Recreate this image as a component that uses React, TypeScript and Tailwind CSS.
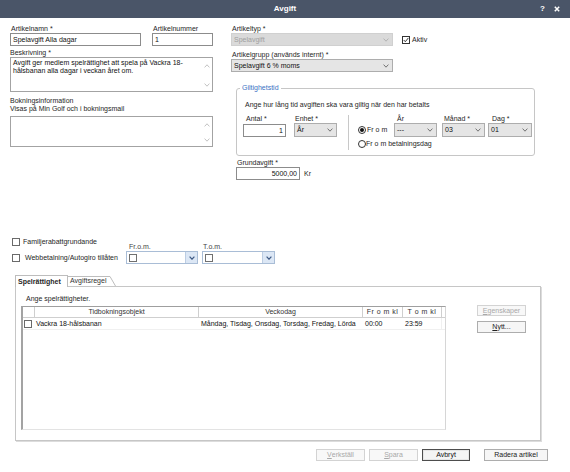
import React from "react";

function Chevron({ color = "#555", sw = 0.8 }: { color?: string; sw?: number }) {
  return (
    <svg width="6" height="4" viewBox="0 0 6 4" className="shrink-0">
      <polyline points="0.6,0.6 3,3.2 5.4,0.6" fill="none" stroke={color} strokeWidth={sw} />
    </svg>
  );
}

function Up({ color = "#b3b3b3" }: { color?: string }) {
  return (
    <svg width="6" height="4" viewBox="0 0 6 4" className="shrink-0">
      <polyline points="0.6,3.4 3,0.8 5.4,3.4" fill="none" stroke={color} strokeWidth={0.8} />
    </svg>
  );
}

function Label({ children, className = "" }: { children: React.ReactNode; className?: string }) {
  return <div className={"h-[8px] leading-[8px] whitespace-nowrap " + className}>{children}</div>;
}

function Input({ value, className = "", right = false }: { value?: string; className?: string; right?: boolean }) {
  return (
    <div
      className={
        "flex items-center border border-[#8c8c8c] bg-white px-[2px] text-[#111] " +
        (right ? "justify-end " : "") +
        className
      }
    >
      <span className="leading-[8px] whitespace-nowrap">{value}</span>
    </div>
  );
}

function Select({ value, className = "", disabled = false }: { value: string; className?: string; disabled?: boolean }) {
  return (
    <div
      className={
        "flex items-center justify-between border pl-[2px] pr-[3px] " +
        (disabled ? "border-[#d0d0d0] bg-[#dadada] text-[#a0a0a0] " : "border-[#adadad] bg-[#e5e5e5] text-[#111] ") +
        className
      }
    >
      <span className="leading-[8px] whitespace-nowrap">{value}</span>
      <Chevron color={disabled ? "#a8a8a8" : "#555"} />
    </div>
  );
}

function Box({ checked = false, light = false, className = "" }: { checked?: boolean; light?: boolean; className?: string }) {
  return (
    <div
      className={
        "flex h-[8px] w-[8px] shrink-0 items-center justify-center border bg-white " +
        (light ? "border-[#6a6a6a] " : "border-[#333] ") +
        className
      }
    >
      {checked && (
        <svg width="6" height="6" viewBox="0 0 6 6">
          <polyline points="0.7,3 2.3,4.7 5.4,0.9" fill="none" stroke="#222" strokeWidth="0.9" />
        </svg>
      )}
    </div>
  );
}

function Radio({ checked = false }: { checked?: boolean }) {
  return (
    <div className="flex h-[8px] w-[8px] shrink-0 items-center justify-center rounded-full border border-[#333] bg-white">
      {checked && <div className="h-[4px] w-[4px] rounded-full bg-[#111]" />}
    </div>
  );
}

function TextArea({ children, className = "" }: { children?: React.ReactNode; className?: string }) {
  return (
    <div className={"flex border border-[#a3a3a3] bg-white " + className}>
      <div className="flex-1 pl-[2px] pt-[1px] leading-[7.5px] text-[#111]">{children}</div>
      <div className="flex w-[10px] flex-col items-center justify-between pb-[4px] pt-[6px]">
        <Up />
        <Chevron color="#b3b3b3" />
      </div>
    </div>
  );
}

function Combo({ className = "" }: { className?: string }) {
  return (
    <div className={"flex h-[13px] border border-[#a9bdd6] bg-white " + className}>
      <div className="flex flex-1 items-center pl-[2px]">
        <div className="h-[8px] w-[8px] border border-[#707070] bg-white" />
      </div>
      <div className="flex w-[12px] items-center justify-center border-l border-[#bccde3] bg-[#dce7f5]">
        <Chevron color="#3e5a85" sw={1.2} />
      </div>
    </div>
  );
}

function Btn({
  children,
  className = "",
  kind = "normal",
}: {
  children: React.ReactNode;
  className?: string;
  kind?: "normal" | "disabled" | "default";
}) {
  const k =
    kind === "disabled"
      ? "border-[#d3d3d3] bg-[#f8f8f8] text-[#a8a8a8] "
      : kind === "default"
      ? "border-[#4d4d4d] bg-[#f4f4f4] text-[#111] shadow-[inset_0_0_0_1px_#e6e6e6] "
      : "border-[#adadad] bg-[#f6f6f6] text-[#222] ";
  return (
    <div className={"flex items-center justify-center border leading-[8px] whitespace-nowrap " + k + className}>
      {children}
    </div>
  );
}

export default function App() {
  return (
    <div className="h-[472px] w-[570px] overflow-hidden bg-white font-['Liberation_Sans',Arial,sans-serif] text-[7px] text-[#262626]">
      {/* Title bar */}
      <div className="flex h-[18px] items-center bg-[#4a5568] text-white">
        <div className="w-[40px]" />
        <div className="flex-1 text-center text-[8px] font-bold leading-[10px]">Avgift</div>
        <div className="flex w-[40px] items-center gap-[9px] pl-[10px]">
          <span className="text-[8px] font-bold leading-[10px]">?</span>
          <svg width="6" height="6" viewBox="0 0 6 6">
            <path d="M0.8 0.8 L5.2 5.2 M5.2 0.8 L0.8 5.2" stroke="#fff" strokeWidth="1.5" />
          </svg>
        </div>
      </div>

      {/* Top section */}
      <div className="flex pt-[7px]">
        <div className="ml-[10px] flex w-[203px] flex-col">
          <div className="flex">
            <div className="w-[131px]">
              <Label className="pl-[1px]">Artikelnamn *</Label>
              <Input className="h-[13px]" value="Spelavgift Alla dagar" />
            </div>
            <div className="ml-[11px] w-[61px]">
              <Label className="pl-[1px]">Artikelnummer</Label>
              <Input className="h-[13px]" value="1" />
            </div>
          </div>
          <Label className="mt-[3px]">Beskrivning *</Label>
          <TextArea className="h-[35px]">
            Avgift ger medlem spelrättighet att spela på Vackra 18-
            <br />
            hålsbanan alla dagar i veckan året om.
          </TextArea>
          <Label className="mt-[5px]">Bokningsinformation</Label>
          <Label>Visas på Min Golf och i bokningsmail</Label>
          <TextArea className="mt-[3px] h-[31px]" />
        </div>

        <div className="ml-[18px] flex flex-col">
          <Label className="pl-[1px]">Artikeltyp *</Label>
          <div className="flex items-center">
            <Select disabled className="h-[13px] w-[162px]" value="Spelavgift" />
            <Box checked className="ml-[9px]" />
            <span className="ml-[2px] leading-[8px]">Aktiv</span>
          </div>
          <Label className="mt-[5px] pl-[1px]">Artikelgrupp (används internt) *</Label>
          <Select className="h-[13px] w-[162px]" value="Spelavgift 6 % moms" />

          <fieldset className="ml-[5px] mt-[12px] w-[299px] rounded-[3px] border border-[#c6c6c6] pb-[5px]">
            <legend className="ml-[3px] px-[2px] leading-[8px] text-[#3a72c4]">Giltighetstid</legend>
            <div className="pl-[6px]">
              <div className="pl-[2px] pt-[9px] leading-[8px] whitespace-nowrap">
                Ange hur lång tid avgiften ska vara giltig när den har betalts
              </div>
              <div className="mt-[6px] flex items-start">
                <div className="w-[43px]">
                  <Label className="pl-[3px]">Antal *</Label>
                  <Input right className="mt-[1px] h-[13px]" value="1" />
                </div>
                <div className="ml-[8px] w-[43px]">
                  <Label className="pl-[1px]">Enhet *</Label>
                  <Select className="h-[14px]" value="År" />
                </div>
                <div className="ml-[11px] h-[35px] w-px bg-[#c8c8c8]" />
                <div className="ml-[9px] flex flex-col">
                  <div className="flex items-end">
                    <div className="flex h-[14px] w-[36px] items-center">
                      <Radio checked />
                      <span className="ml-[1px] leading-[8px]">Fr o m</span>
                    </div>
                    <div className="w-[43px]">
                      <Label className="pl-[3px]">År</Label>
                      <Select className="h-[14px]" value="---" />
                    </div>
                    <div className="ml-[5px] w-[43px]">
                      <Label className="pl-[2px]">Månad *</Label>
                      <Select className="h-[14px]" value="03" />
                    </div>
                    <div className="ml-[3px] w-[44px]">
                      <Label className="pl-[4px]">Dag *</Label>
                      <Select className="h-[14px]" value="01" />
                    </div>
                  </div>
                  <div className="mt-[3px] flex h-[8px] items-center">
                    <Radio />
                    <span className="leading-[8px]">Fr o m betalningsdag</span>
                  </div>
                </div>
              </div>
            </div>
          </fieldset>

          <div className="ml-[5px]">
            <Label className="mt-[3px] pl-[1px]">Grundavgift *</Label>
            <div className="flex items-center">
              <Input right className="h-[13px] w-[64px]" value="5000,00" />
              <span className="ml-[4px] leading-[8px]">Kr</span>
            </div>
          </div>
        </div>
      </div>

      {/* Middle options */}
      <div className="ml-[12px] mt-[58px] flex items-start">
        <div className="flex w-[114px] flex-col">
          <div className="flex h-[8px] items-center">
            <Box light />
            <span className="ml-[3px] leading-[8px] whitespace-nowrap">Familjerabattgrundande</span>
          </div>
          <div className="mt-[8px] flex h-[8px] items-center">
            <Box light />
            <span className="ml-[5px] leading-[8px] whitespace-nowrap">Webbetalning/Autogiro tillåten</span>
          </div>
        </div>
        <div className="w-[72px]">
          <Label className="mt-[5px] pl-[3px] text-[#444]">Fr.o.m.</Label>
          <Combo />
        </div>
        <div className="ml-[4px] w-[73px]">
          <Label className="mt-[5px] pl-[1px] text-[#444]">T.o.m.</Label>
          <Combo />
        </div>
      </div>

      {/* Tabs */}
      <div className="ml-[15px] mt-[11px] flex h-[11px]">
        <div className="relative z-10 -mb-px flex h-[12px] w-[53px] items-center border-l border-r border-t border-[#bdbdbd] bg-white pl-[2px] font-bold leading-[8px]">
          Spelrättighet
        </div>
        <div className="relative flex w-[48px] items-center pl-[2px] pt-[1px] leading-[8px] text-[#333]">
          <svg className="absolute left-0 top-0" width="48" height="11" viewBox="0 0 48 11">
            <polyline points="0,1.5 42,1.5 47.5,11" fill="none" stroke="#bdbdbd" strokeWidth="1" />
          </svg>
          <span className="relative">Avgiftsregel</span>
        </div>
      </div>

      {/* Panel */}
      <div className="ml-[15px] h-[155px] w-[526px] border border-[#c6c6c6] bg-white pl-[5px] pt-[8px] shadow-[1px_1px_0_#dcdcdc]">
        <div className="pl-[5px] leading-[8px]">Ange spelrättigheter.</div>
        <div className="mt-[3px] flex items-start">
          <div className="h-[124px] w-[425px] border-b border-l-2 border-r border-t border-b-[#e3e3e3] border-l-[#a3a3a3] border-r-[#d6d6d6] border-t-[#9f9f9f] bg-white">
            <div className="flex h-[11px] border-b border-[#cfcfcf] text-[#333]">
              <div className="w-[12px] border-r border-[#cfcfcf]" />
              <div className="flex w-[164px] items-center justify-center border-r border-[#cfcfcf] leading-[8px]">
                Tidbokningsobjekt
              </div>
              <div className="flex w-[164px] items-center justify-center border-r border-[#cfcfcf] leading-[8px]">
                Veckodag
              </div>
              <div className="flex w-[40px] items-center justify-center border-r border-[#cfcfcf] leading-[8px] tracking-[0.5px]">
                Fr o m kl
              </div>
              <div className="flex w-[39px] items-center justify-center border-r border-[#cfcfcf] leading-[8px] tracking-[0.5px]">
                T o m kl
              </div>
            </div>
            <div className="flex h-[12px] border-b border-[#f0f0f0] text-[#111]">
              <div className="flex w-[12px] items-center pl-[1px]">
                <Box light />
              </div>
              <div className="flex w-[164px] items-center pl-[1px] leading-[8px]">Vackra 18-hålsbanan</div>
              <div className="flex w-[164px] items-center overflow-hidden whitespace-nowrap pl-[2px] leading-[8px]">
                Måndag, Tisdag, Onsdag, Torsdag, Fredag, Lörda
              </div>
              <div className="flex w-[40px] items-center pl-[2px] leading-[8px]">00:00</div>
              <div className="flex w-[39px] items-center border-r border-[#f0f0f0] pl-[2px] leading-[8px]">23:59</div>
            </div>
          </div>
          <div className="-mt-px ml-[31px] flex flex-col">
            <Btn kind="disabled" className="h-[11px] w-[49px]">
              <span className="underline">E</span>genskaper
            </Btn>
            <Btn className="mt-[5px] h-[12px] w-[49px]">
              <span className="underline">N</span>ytt...
            </Btn>
          </div>
        </div>
      </div>

      {/* Bottom buttons */}
      <div className="mt-[8px] flex justify-end pr-[22px]">
        <Btn kind="disabled" className="h-[12px] w-[49px]">
          <span className="underline">V</span>erkställ
        </Btn>
        <Btn kind="disabled" className="ml-[4px] h-[12px] w-[49px]">
          <span className="underline">S</span>para
        </Btn>
        <Btn kind="default" className="ml-[4px] h-[12px] w-[48px]">
          Avbryt
        </Btn>
        <Btn className="ml-[14px] h-[12px] w-[64px]">Radera artikel</Btn>
      </div>
    </div>
  );
}
